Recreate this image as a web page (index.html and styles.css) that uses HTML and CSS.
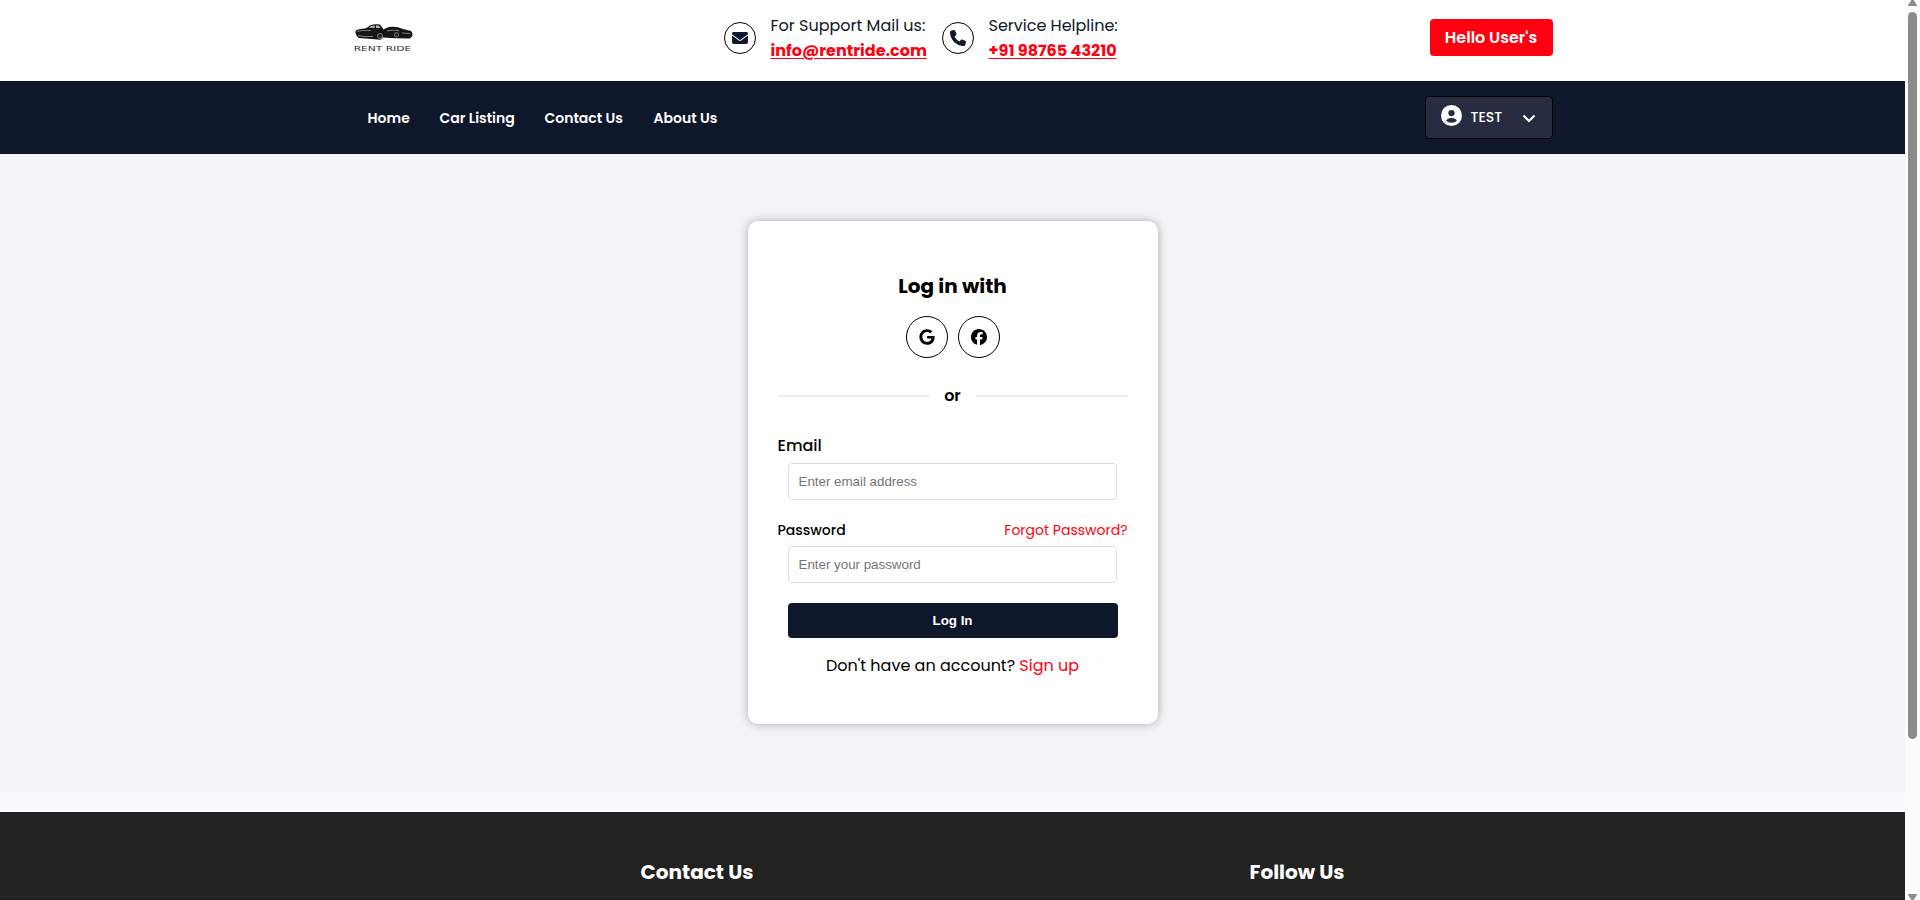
FILE: index.html
```html
<!DOCTYPE html>
<html lang="en">
<head>
<meta charset="utf-8">
<title>Rent Ride - Log In</title>
<link rel="stylesheet" href="styles.css">
</head>
<body>
<div class="window">
  <div class="page">
    <header class="topbar">
      <div class="container topbar-inner">
        <svg class="logo" viewBox="0 0 60 32">
          <path d="M2.500 8Q3 6.600 6 6.200L13 5.200 17 2.400Q22 .6 27 1.600L30 5.600 30 12Q29 18 25 16.600L6 15Q2 12 2.500 8Z" fill="#151515"/>
          <path d="M30 6.500L36 4Q43 2.800 50 6L58 8Q60 9.500 59.400 13L57 15.500 42 15.300 30 14.400Z" fill="#151515"/>
          <path d="M15.500 4.800L18.500 2.900 22 2.400 21.500 5Z M23 2.400L26 2.500 27.500 5 23 5Z" fill="#b5b5b5"/>
          <path d="M4 8.300Q10 7 18 7.600M5 12.500Q11 14.300 20 13.500M34 7.800Q41 6.600 46 7.600M49 10L57 10.500" fill="none" stroke="#aaa" stroke-width=".7"/>
          <circle cx="27" cy="13" r="2.600" fill="#222" stroke="#999" stroke-width=".7"/>
          <circle cx="43.500" cy="11.800" r="2.200" fill="#222" stroke="#999" stroke-width=".7"/>
          <text x=".7" y="28" textLength="57.500" lengthAdjust="spacingAndGlyphs" class="logo-text">RENT RIDE</text>
        </svg>
        <div class="support">
          <div class="support-item">
            <span class="round"><svg width="16" height="16" viewBox="0 0 512 512"><path fill="#0f172a" d="M48 64C21.500 64 0 85.500 0 112c0 15.100 7.100 29.300 19.200 38.400L236.800 313.600c11.400 8.500 27 8.500 38.400 0L492.800 150.400c12.100-9.100 19.200-23.300 19.200-38.400c0-26.500-21.500-48-48-48H48zM0 176V384c0 35.300 28.700 64 64 64H448c35.300 0 64-28.700 64-64V176L294.400 339.200c-22.800 17.100-54 17.100-76.800 0L0 176z"/></svg></span>
            <div class="support-text mail"><p>For Support Mail us:</p><a>info@rentride.com</a></div>
          </div>
          <div class="support-item">
            <span class="round"><svg width="16" height="16" viewBox="0 0 512 512"><path fill="#0f172a" d="M164.900 24.600c-7.700-18.600-28-28.500-47.400-23.200l-88 24C12.100 30.200 0 46 0 64C0 311.400 200.600 512 448 512c18 0 33.800-12.100 38.600-29.500l24-88c5.300-19.400-4.600-39.700-23.200-47.400l-96-40c-16.300-6.800-35.200-2.100-46.300 11.600L304.700 368C234.300 334.700 177.300 277.700 144 207.300L193.300 167c13.700-11.200 18.400-30 11.600-46.300l-40-96z"/></svg></span>
            <div class="support-text phone"><p>Service Helpline:</p><a>+91 98765 43210</a></div>
          </div>
        </div>
        <button class="hello">Hello User's</button>
      </div>
    </header>
    <nav class="navbar">
      <div class="container navbar-inner">
        <div class="links">
          <a class="w-home">Home</a><a class="w-car">Car Listing</a><a class="w-contact">Contact Us</a><a class="w-about">About Us</a>
        </div>
        <button class="user">
          <svg class="avatar" viewBox="0 0 20 20"><circle cx="10" cy="10" r="10" fill="#fff"/><circle cx="10" cy="7.700" r="3" fill="#272d40"/><path d="M4.800 14.800Q6 12.300 10 12.300T15.200 14.800Q13.500 17 10 17T4.800 14.800Z" fill="#272d40"/></svg>
          <span>TEST</span>
          <svg class="chevron" viewBox="0 0 14 9"><path d="M1.500 1.500L7 7 12.500 1.500" fill="none" stroke="#fff" stroke-width="2"/></svg>
        </button>
      </div>
    </nav>
    <main class="main">
      <form class="card">
        <h1 class="title">Log in with</h1>
        <div class="social">
          <a><svg width="16" height="16" viewBox="0 0 488 512"><path d="M488 261.800C488 403.300 391.100 504 248 504 110.800 504 0 393.200 0 256S110.800 8 248 8c66.800 0 123 24.500 166.300 64.900l-67.500 64.900C258.500 52.600 94.300 116.600 94.300 256c0 86.500 69.100 156.600 153.700 156.600 98.200 0 135-70.400 140.800-106.900H248v-85.300h236.100c2.300 12.700 3.900 24.900 3.900 41.400z"/></svg></a>
          <a><svg width="16" height="16" viewBox="0 0 512 512"><path d="M512 256C512 114.600 397.400 0 256 0S0 114.600 0 256C0 376 82.700 476.800 194.200 504.500V334.200H141.400V256h52.800V222.300c0-87.100 39.400-127.500 125-127.500c16.200 0 44.200 3.200 55.700 6.400V172c-6-.6-16.500-1-29.600-1c-42 0-58.200 15.900-58.200 57.200V256h83.600l-14.400 78.200H287V510.100C413.800 494.800 512 386.900 512 256z"/></svg></a>
        </div>
        <div class="or"><span>or</span></div>
        <label class="label-email" for="email">Email</label>
        <input id="email" type="email" placeholder="Enter email address">
        <div class="row"><label class="label-pass" for="pass">Password</label><a class="forgot">Forgot Password?</a></div>
        <input id="pass" type="password" placeholder="Enter your password">
        <button class="submit" type="button">Log In</button>
        <p class="signup">Don't have an account? <a>Sign up</a></p>
      </form>
    </main>
    <footer class="footer">
      <section><h2>Contact Us</h2></section>
      <section><h2>Follow Us</h2></section>
    </footer>
  </div>
  <div class="scrollbar">
    <svg width="9" height="6" viewBox="0 0 9 6"><path d="M3.500 0h2L9 5.200V6H0V5.200Z" fill="#8b8b8b"/></svg>
    <div class="thumb"></div>
    <svg class="down" width="9" height="6" viewBox="0 0 9 6"><path d="M0 0H9V.8L5.500 6h-2L0 .8Z" fill="#8b8b8b"/></svg>
  </div>
</div>
</body>
</html>
```
FILE: styles.css
```css
* { box-sizing: border-box; margin: 0; padding: 0; }
body { font-family: Poppins, Inter, sans-serif; font-size: 16px; color: #000; overflow: hidden; }
button { border: 0; font-family: inherit; }
.window { display: flex; height: 900px; overflow: hidden; }
.page { width: 1905px; display: flex; flex-direction: column; background: #f8fafc; }
.container { width: 1200px; margin: 0 auto; display: flex; justify-content: space-between; }

.topbar { height: 81px; flex: none; background: #fff; }
.topbar-inner { align-items: flex-start; }
.logo { width: 60px; height: 32px; margin-top: 23px; flex: none; }
.logo-text { font: 7px "DejaVu Sans", sans-serif; fill: #333; }
.support { display: flex; gap: 15px; margin: 13px auto 0 311px; }
.support-item { display: flex; gap: 15px; }
.round { width: 32px; height: 32px; margin-top: 9px; border: 1px solid #000; border-radius: 50%; display: flex; align-items: center; justify-content: center; flex: none; }
.support-text { line-height: 25px; white-space: nowrap; color: #0f172a; }
.support-text a { display: block; font-weight: 700; color: #ff0011; text-decoration: underline; text-decoration-thickness: 1px; text-underline-offset: 2px; }
.mail { width: 156px; }
.phone { width: 130px; }
.hello { width: 123px; height: 37px; margin-top: 19px; border-radius: 4px; background: #ff0011; color: #fff; font-size: 16px; font-weight: 600; white-space: nowrap; }

.navbar { height: 73px; flex: none; background: #0f172a; }
.navbar-inner { height: 73px; align-items: center; }
.links { display: flex; gap: 30px; padding: 2px 0 0 15px; font-size: 14px; font-weight: 600; color: #fff; white-space: nowrap; }
.w-home { width: 42px; }
.w-car { width: 75px; }
.w-contact { width: 79px; }
.w-about { width: 64px; }
.user { width: 128px; height: 43px; padding: 0 16px 0 15px; margin-bottom: 1px; display: flex; align-items: center; border: 1px solid #000; border-radius: 4px; background: #272d40; color: #fff; font-size: 14px; font-weight: 500; }
.avatar { width: 21px; height: 21px; margin: 0 9px 4px 0; }
.chevron { width: 14px; height: 9px; margin: 2px 0 0 auto; }

.main { height: 638px; flex: none; margin-bottom: 20px; padding-top: 67px; background: #f3f4f6; }
.card { width: 410px; height: 503px; margin: 0 auto; padding: 50px 30px 0; background: #fff; border-radius: 10px; box-shadow: 0 0 10px rgba(0, 0, 0, .3); }
.title { font-size: 20px; line-height: 30px; font-weight: 700; text-align: center; }
.social { display: flex; justify-content: center; gap: 10px; margin-top: 15px; }
.social a { width: 42px; height: 42px; border: 1px solid #000; border-radius: 50%; display: flex; align-items: center; justify-content: center; }
.or { display: flex; align-items: center; gap: 15px; margin-top: 26px; line-height: 24px; font-weight: 600; }
.or::before, .or::after { content: ""; flex: 1; height: 2px; background: #eee; }
.label-email { display: block; margin-top: 26px; line-height: 24px; font-weight: 500; }
input { display: block; width: 329px; height: 37px; margin: 5px 0 0 10px; padding: 0 10px; border: 1px solid #ddd; border-radius: 4px; background: #fff; font: 13.333px "Liberation Sans", Arial, sans-serif; }
input::placeholder { color: #757575; opacity: 1; }
.row { display: flex; justify-content: space-between; margin-top: 20px; line-height: 21px; font-size: 14px; }
.label-pass { font-weight: 500; }
.forgot, .signup a { color: #ff0011; }
.submit { display: block; width: 330px; height: 35px; margin: 20px 0 0 10px; border-radius: 4px; background: #0f172a; color: #fff; font: 700 13.333px "Liberation Sans", Arial, sans-serif; }
.signup { margin-top: 16px; line-height: 24px; text-align: center; white-space: nowrap; }

.footer { flex: 1; padding: 45px 0 0 397px; display: flex; background: #222; border-bottom: 1px solid #1e191b; color: #fff; }
.footer section { width: 600px; text-align: center; }
.footer h2 { font-size: 20px; line-height: 30px; font-weight: 700; }

.scrollbar { width: 15px; background: #fcfcfc; display: flex; flex-direction: column; align-items: center; }
.thumb { width: 9px; height: 727px; margin-top: 6px; border-radius: 5px; background: #8b8b8b; }
.down { margin-top: auto; }
```
